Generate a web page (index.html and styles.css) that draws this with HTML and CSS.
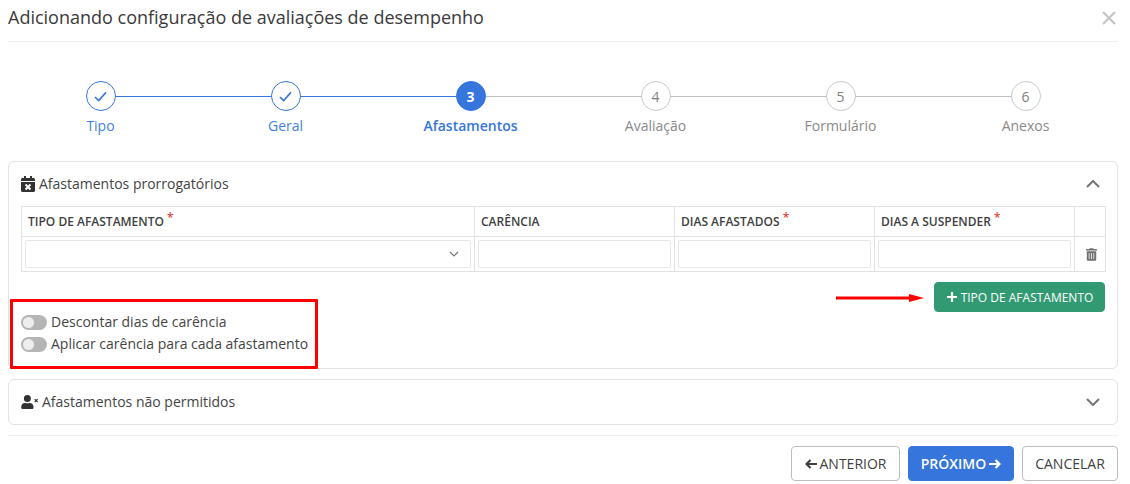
FILE: index.html
```html
<!DOCTYPE html>
<html lang="pt-BR">
<head>
<meta charset="utf-8">
<title>Adicionando configuração</title>
<link rel="stylesheet" href="styles.css">
</head>
<body>
<div class="modal">
  <header class="modal-header">
    <h1 class="modal-title">Adicionando configuração de avaliações de desempenho</h1>
    <svg class="close" viewBox="0 0 14 14"><path d="M1 1l12 12M13 1L1 13"/></svg>
  </header>

  <ol class="stepper">
    <li class="step done"><span class="dot"><svg class="check" viewBox="0 0 14 12"><path d="M1 6.500l4 4 8-9"/></svg></span><span class="label">Tipo</span></li>
    <li class="step done"><span class="dot"><svg class="check" viewBox="0 0 14 12"><path d="M1 6.500l4 4 8-9"/></svg></span><span class="label">Geral</span></li>
    <li class="step active"><span class="dot">3</span><span class="label">Afastamentos</span></li>
    <li class="step"><span class="dot">4</span><span class="label">Avaliação</span></li>
    <li class="step"><span class="dot">5</span><span class="label">Formulário</span></li>
    <li class="step"><span class="dot">6</span><span class="label">Anexos</span></li>
  </ol>

  <section class="card card-open">
    <div class="card-head">
      <span class="card-title">
        <svg class="ico-cal" viewBox="0 0 448 512"><path d="M436 160H12c-6.600 0-12-5.400-12-12v-36c0-26.500 21.500-48 48-48h48V12c0-6.600 5.400-12 12-12h40c6.600 0 12 5.400 12 12v52h128V12c0-6.600 5.400-12 12-12h40c6.600 0 12 5.400 12 12v52h48c26.500 0 48 21.500 48 48v36c0 6.600-5.400 12-12 12zM12 192h424c6.600 0 12 5.400 12 12v260c0 26.500-21.500 48-48 48H48c-26.500 0-48-21.500-48-48V204c0-6.600 5.400-12 12-12zm257.300 160l48.100-48.100c4.700-4.700 4.700-12.300 0-17l-28.300-28.300c-4.700-4.700-12.300-4.700-17 0L224 306.700l-48.100-48.100c-4.700-4.700-12.300-4.700-17 0l-28.300 28.300c-4.700 4.700-4.700 12.300 0 17l48.100 48.100-48.100 48.100c-4.700 4.700-4.700 12.300 0 17l28.300 28.300c4.700 4.700 12.300 4.700 17 0l48.100-48.100 48.100 48.100c4.700 4.700 12.300 4.700 17 0l28.300-28.300c4.700-4.700 4.700-12.300 0-17L269.300 352z"/></svg>
        Afastamentos prorrogatórios
      </span>
      <svg class="chev" viewBox="0 0 14 8"><path d="M1 7l6-6 6 6"/></svg>
    </div>

    <table class="grid">
      <colgroup>
        <col class="col-a"><col class="col-b"><col class="col-b"><col class="col-b"><col class="col-c">
      </colgroup>
      <thead>
        <tr>
          <th>TIPO DE AFASTAMENTO <sup class="req">*</sup></th>
          <th>CARÊNCIA</th>
          <th>DIAS AFASTADOS <sup class="req">*</sup></th>
          <th>DIAS A SUSPENDER <sup class="req">*</sup></th>
          <th></th>
        </tr>
      </thead>
      <tbody>
        <tr>
          <td><div class="input select"><svg class="chev-sm" viewBox="0 0 10 6"><path d="M1 1l4 4 4-4"/></svg></div></td>
          <td><div class="input"></div></td>
          <td><div class="input"></div></td>
          <td><div class="input"></div></td>
          <td class="trash-cell"><svg class="trash" viewBox="0 0 448 512"><path d="M32 464a48 48 0 0 0 48 48h288a48 48 0 0 0 48-48V128H32zm272-256a16 16 0 0 1 32 0v224a16 16 0 0 1-32 0zm-96 0a16 16 0 0 1 32 0v224a16 16 0 0 1-32 0zm-96 0a16 16 0 0 1 32 0v224a16 16 0 0 1-32 0zM432 32H312l-9.400-18.700A24 24 0 0 0 281.100 0H166.800a23.700 23.700 0 0 0-21.400 13.300L136 32H16A16 16 0 0 0 0 48v32a16 16 0 0 0 16 16h416a16 16 0 0 0 16-16V48a16 16 0 0 0-16-16z"/></svg></td>
        </tr>
      </tbody>
    </table>

    <div class="add-row">
      <button class="btn btn-green" type="button"><svg class="ico-plus" viewBox="0 0 12 12"><path d="M6 1v10M1 6h10"/></svg>TIPO DE AFASTAMENTO</button>
    </div>

    <div class="toggles">
      <label class="toggle"><span class="switch"></span>Descontar dias de carência</label>
      <label class="toggle"><span class="switch"></span>Aplicar carência para cada afastamento</label>
    </div>

    <div class="mark-box"></div>
    <svg class="mark-arrow" viewBox="0 0 88 10"><path d="M0 3.500h73V1l15 4-15 4V6.500H0z"/></svg>
  </section>

  <section class="card card-closed">
    <div class="card-head">
      <span class="card-title">
        <svg class="ico-user" viewBox="0 0 640 512"><path d="M224 256A128 128 0 1 0 224 0a128 128 0 0 0 0 256zm89.600 32h-16.700a174.100 174.100 0 0 1-145.800 0h-16.700C60.200 288 0 348.200 0 422.400V464a48 48 0 0 0 48 48h352a48 48 0 0 0 48-48v-41.600c0-74.200-60.200-134.400-134.400-134.400z"/><path class="x" d="M490 150l110 110M600 150L490 260"/></svg>
        Afastamentos não permitidos
      </span>
      <svg class="chev" viewBox="0 0 14 8"><path d="M1 1l6 6 6-6"/></svg>
    </div>
  </section>

  <footer class="modal-footer">
    <button class="btn btn-outline" type="button"><svg class="ico-arrow" viewBox="0 0 12 10"><path d="M12 5H1.500M5.500 1L1.500 5l4 4"/></svg>ANTERIOR</button>
    <button class="btn btn-blue" type="button">PRÓXIMO<svg class="ico-arrow" viewBox="0 0 12 10"><path d="M0 5h10.500M6.500 1l4 4-4 4"/></svg></button>
    <button class="btn btn-outline" type="button">CANCELAR</button>
  </footer>
</div>
</body>
</html>
```

FILE: styles.css
```css
* { box-sizing: border-box; }
html, body { margin: 0; padding: 0; background: #fff; }
body { font-family: "Open Sans", "Liberation Sans", sans-serif; color: #3f3f3f; overflow: hidden; }

.modal { width: 1130px; height: 484px; padding: 0 12px 0 8px; }

.modal-header { height: 42px; border-bottom: 1px solid #eeeeee; display: flex; justify-content: space-between; align-items: flex-start; }
.modal-title { margin: 4px 0 0; font-size: 18px; font-weight: 400; line-height: 26px; color: #3a3a3a; }
.close { width: 14px; height: 14px; margin: 11px 2px 0 0; fill: none; stroke: #c4c4c4; stroke-width: 2.200; }

.stepper { list-style: none; margin: 39px 0 0; padding: 0; display: grid; grid-template-columns: repeat(6, 185px); height: 80px; }
.step { position: relative; display: flex; flex-direction: column; align-items: center; color: #8a8a8a; }
.step::after { content: ""; position: absolute; top: 15px; left: calc(50% + 15px); width: 155px; height: 1px; background: #bdbdbd; }
.step:last-child::after { display: none; }
.step.done::after { background: #3575dc; }
.dot { width: 30px; height: 30px; border-radius: 50%; border: 1px solid #c9c9c9; display: flex; align-items: center; justify-content: center; font-size: 14px; color: #808080; background: #fff; }
.done .dot { border-color: #3575dc; }
.active .dot { background: #3575dc; border-color: #3575dc; color: #fff; font-weight: 700; }
.check { width: 13px; height: 11px; fill: none; stroke: #3575dc; stroke-width: 1.700; }
.label { margin-top: 5px; font-size: 14px; line-height: 20px; }
.done .label { color: #3f7fdf; }
.active .label { color: #3575dc; font-weight: 600; }

.card { border: 1px solid #e3e3e3; border-radius: 6px; background: #fff; }
.card-open { position: relative; height: 208px; padding: 0 12px; }
.card-closed { height: 46px; margin-top: 10px; padding: 0 12px; }
.card-head { display: flex; align-items: center; justify-content: space-between; height: 44px; }
.card-title { font-size: 14px; line-height: 20px; display: flex; align-items: center; gap: 4px; color: #444; }
.card-closed .card-title { gap: 3px; }
.ico-cal { width: 14px; height: 16px; fill: #333; }
.ico-user { width: 18px; height: 14px; fill: #333; }
.ico-user .x { fill: none; stroke: #333; stroke-width: 44; }
.chev { width: 14px; height: 8px; margin-right: 5px; fill: none; stroke: #757575; stroke-width: 2; }

.grid { width: 1084px; table-layout: fixed; border-collapse: collapse; }
.col-a { width: 453px; }
.col-b { width: 200px; }
.col-c { width: 31px; }
.grid th, .grid td { border: 1px solid #e2e2e2; padding: 0; }
.grid th { height: 30px; padding: 0 6px; text-align: left; font-size: 12px; font-weight: 600; color: #3f3f3f; white-space: nowrap; }
.grid td { height: 35px; padding: 3px; }
.req { color: #e8413e; font-size: 12px; line-height: 0; vertical-align: 4px; }
.input { height: 28px; border: 1px solid #e8e8e8; border-radius: 2px; display: flex; align-items: center; justify-content: flex-end; }
.chev-sm { width: 10px; height: 6px; margin-right: 10px; fill: none; stroke: #777; stroke-width: 1.200; }
.select .chev-sm { margin-right: 11px; }
.grid .trash-cell { padding-left: 5px; }
.trash { width: 11px; height: 13px; fill: #707070; display: block; margin: 0 auto; }

.add-row { display: flex; justify-content: flex-end; margin-top: 10px; height: 30px; }
.btn { font-family: inherit; border-radius: 4px; font-size: 14px; display: inline-flex; align-items: center; justify-content: center; padding: 0; }
.btn-green { width: 171px; height: 30px; background: #329a72; border: 1px solid #329a72; color: #fff; font-size: 12px; gap: 3px; }
.ico-plus { width: 12px; height: 12px; fill: none; stroke: #fff; stroke-width: 2.200; }

.toggles { margin-top: 0; display: flex; flex-direction: column; gap: 2px; }
.toggle { display: flex; align-items: center; gap: 4px; font-size: 14px; height: 20px; line-height: 20px; color: #444; }
.switch { position: relative; width: 26px; height: 15px; border-radius: 8px; background: #b5b5b5; }
.switch::before { content: ""; position: absolute; left: 2px; top: 2px; width: 11px; height: 11px; border-radius: 50%; background: #eeeeee; }

.mark-box { position: absolute; left: 1px; top: 137px; width: 308px; height: 70px; border: 3px solid #ff0000; border-radius: 1px; }
.mark-arrow { position: absolute; left: 827px; top: 131px; width: 88px; height: 10px; fill: #ff0000; }

.modal-footer { margin-top: 10px; border-top: 1px solid #eeeeee; padding-top: 10px; display: flex; justify-content: flex-end; gap: 8px; }
.btn-outline, .btn-blue { height: 35px; gap: 3px; }
.btn-outline { background: #fff; border: 1px solid #bdbdbd; color: #3f3f3f; }
.btn-outline:nth-child(1) { width: 109px; }
.btn-outline:nth-child(3) { width: 96px; }
.btn-blue { width: 106px; background: #3575dc; border: 1px solid #3575dc; color: #fff; font-weight: 600; }
.ico-arrow { width: 12px; height: 10px; fill: none; stroke: currentColor; stroke-width: 2.200; }
```
